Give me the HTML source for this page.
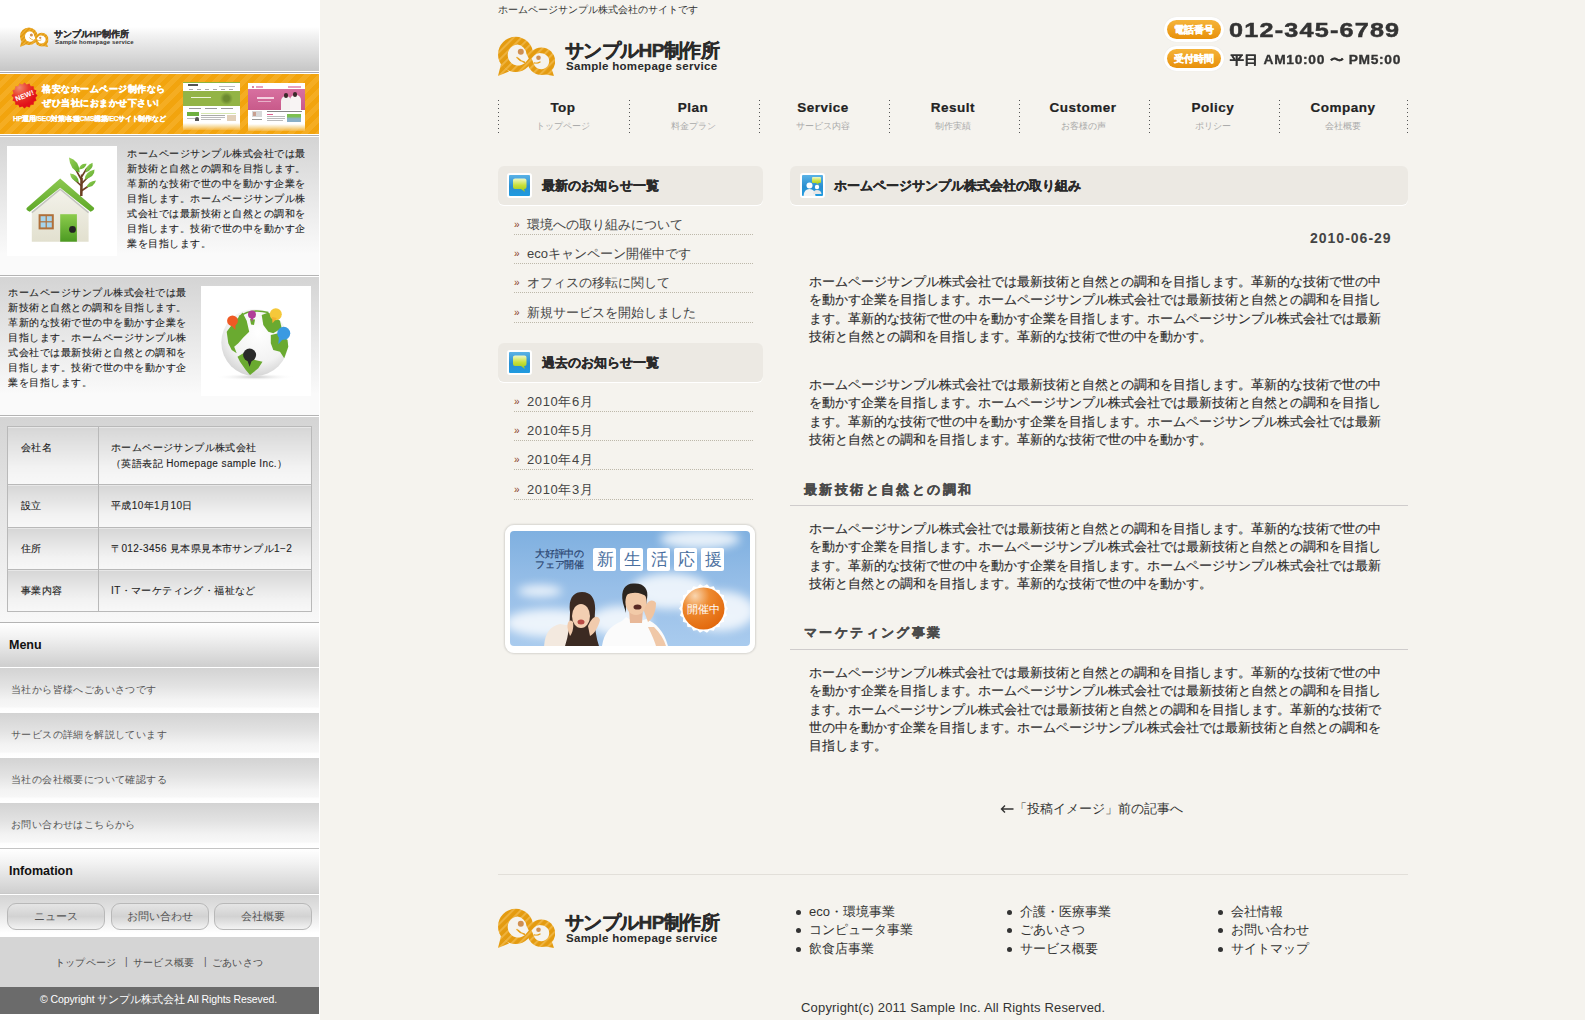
<!DOCTYPE html>
<html lang="ja"><head><meta charset="utf-8">
<style>
*{margin:0;padding:0;box-sizing:border-box}
html,body{width:1585px;height:1020px;overflow:hidden}
body{background:#f5f3ee;font-family:"Liberation Sans",sans-serif;color:#333;position:relative}
.a{position:absolute}
.nw{white-space:nowrap}
/* sidebar */
#side{position:absolute;left:0;top:0;width:320px;height:1020px;background:#fff}
#side .sep{position:absolute;left:0;width:319px;height:1px;background:#b4b4b4}
.hdr{left:0;top:0;width:319px;height:71px;background:linear-gradient(#fff 0,#fff 27px,#f4f4f4 34px,#c6c6c6 71px)}
.orange{left:0;top:74px;width:319px;height:60px;background:repeating-linear-gradient(135deg,#f2a40e 0 5px,#f5ad22 5px 10px)}
.blk{left:0;width:319px;background:linear-gradient(#d4d4d4,#e6e6e6 40%,#fafafa 85%,#fafafa)}
.stxt{font-size:10px;letter-spacing:.5px;line-height:15px;color:#222;-webkit-text-stroke:.1px #222}
.wbox{background:#fff}
table.co{position:absolute;left:7px;top:426px;width:305px;border-collapse:collapse;font-size:10px;letter-spacing:.4px;line-height:16px;color:#222;-webkit-text-stroke:.1px #222}
table.co td{border:1px solid #b9b9b9;background:linear-gradient(#d6d6d6,#e4e4e4 35%,#f2f2f2 70%,#f8f8f8);vertical-align:top;padding:13px 0 0 12px}
.mhd{left:0;width:319px;background:linear-gradient(#fff,#f3f3f3 30%,#cfcfcf)}
.mit{left:0;width:319px;background:linear-gradient(#d3d3d3,#e2e2e2 40%,#f3f3f3 72%,#f7f7f7 88%,#fdfdfd 92%,#fff)}
.mt{font-size:10px;letter-spacing:.4px;color:#555;left:11px}
.btn{top:903px;height:27px;border:1px solid #b8b8b8;border-radius:9px;background:linear-gradient(#e5e5e5,#d2d2d2 50%,#f3f3f3);font-size:10.5px;color:#555;text-align:center;line-height:25px}
/* main */
.navi{top:100px;width:1px;height:33px;background:repeating-linear-gradient(#555 0 1px,transparent 1px 4px)}
.nt{top:100px;width:130px;text-align:center;font-weight:bold;font-size:13.5px;color:#222;letter-spacing:0.5px;-webkit-text-stroke:.2px #222}
.ns{top:120px;width:130px;text-align:center;font-size:9px;color:#aaa}
.bh{height:39px;background:#ece9e3;border-radius:6px;box-shadow:0 1px 0 #fff}
.bt{font-weight:bold;font-size:13px;color:#2a2a2a;-webkit-text-stroke:.3px #2a2a2a}
.icon{width:25px;height:25px;border:2px solid #fff;border-radius:3px;background:linear-gradient(#5ab2e6,#2a8fd0 55%,#1f9be0)}
.li{left:514px;width:239px;height:29px;border-bottom:1px dotted #bdb8aa;font-size:13px;color:#444}
.li span.r{color:#8a3b1b;font-size:10px;position:absolute;left:0;top:13px}
.li span.t{position:absolute;left:13px;top:0}
.p{left:809px;font-size:13px;line-height:18.3px;color:#2e2e2e;white-space:nowrap;-webkit-text-stroke:.15px #2e2e2e}
.h3{left:804px;font-size:13px;font-weight:bold;letter-spacing:2.4px;color:#4a4a4a;-webkit-text-stroke:.3px #4a4a4a}
.h3l{left:790px;width:618px;height:1px;background:#cfcccc}
.fl{font-size:13px;color:#333;line-height:18.3px}
.fl div{position:relative;padding-left:13px}
.fl div:before{content:"";position:absolute;left:0;top:7px;width:5px;height:5px;border-radius:50%;background:#333}
</style></head><body>

<svg width="0" height="0" style="position:absolute">
 <defs>
  <pattern id="st" width="5.6" height="5.6" patternUnits="userSpaceOnUse" patternTransform="rotate(45)"><rect width="5.6" height="5.6" fill="#e49b10"/><rect width="2" height="5.6" fill="#eeb23e"/></pattern>
  <symbol id="logo" viewBox="0 0 57 40">
   <g fill="url(#st)">
    <circle cx="17.6" cy="18.4" r="17.6"/>
    <path d="M0 40 L3 28 L11 35.5 Z"/>
    <circle cx="43.4" cy="25.2" r="13.8"/>
    <path d="M56 40 L53 31 L45 38 Z"/>
   </g>
   <path d="M19.5 8.5 A10.5 10.5 0 1 0 27 27 L30.8 22.6 L28.5 18 A10.5 10.5 0 0 0 19.5 8.5 Z" style="fill:var(--face,#f5f3ee)"/>
   <path d="M43 17.2 A8 8 0 1 1 36.8 30 L33.6 22.4 L36 19.8 A8 8 0 0 1 43 17.2 Z" style="fill:var(--face,#f5f3ee)"/>
   <circle cx="22.8" cy="15.8" r="3" fill="#cf8f52"/>
   <circle cx="40.5" cy="21.7" r="2.3" fill="#cf8f52"/>
   <path d="M19 21.5 Q22 25 26.5 26.2" stroke="url(#st)" stroke-width="1.6" fill="none" stroke-linecap="round"/>
   <path d="M36.5 27 Q39.5 27.5 42 26" stroke="url(#st)" stroke-width="1.4" fill="none" stroke-linecap="round"/>
  </symbol>
 </defs>
</svg>
<div id="side">
  <!-- header -->
  <div class="a hdr"></div>
  <div class="a" style="left:0;top:72px;width:319px;height:1px;background:#a9a9b1"></div>
  <div class="a orange"></div>
  <div class="a" style="left:0;top:135px;width:319px;height:1px;background:#b0b0b0"></div>

  <!-- block 1 -->
  <div class="a blk" style="top:137px;height:138px"></div>
  <div class="sep" style="top:275px"></div>
  <!-- block 2 -->
  <div class="a blk" style="top:277px;height:138px"></div>
  <div class="sep" style="top:415px"></div>
  <!-- table block -->
  <div class="a blk" style="top:417px;height:205px;background:linear-gradient(#d4d4d4,#e3e3e3 40%,#f4f4f4 90%,#f8f8f8)"></div>
  <div class="sep" style="top:622px"></div>

  <!-- sidebar logo -->
  <svg class="a" style="left:20px;top:26.5px;--face:#fff" width="28.5" height="20" viewBox="0 0 57 40"><use href="#logo"/></svg>
  <div class="a nw" style="left:54px;top:27.5px;font-size:9px;font-weight:bold;color:#333;letter-spacing:-0.1px;-webkit-text-stroke:.25px #333">サンプルHP制作所</div>
  <div class="a nw" style="left:55px;top:38.5px;font-size:6px;font-weight:bold;color:#333;letter-spacing:0.15px">Sample homepage service</div>

  <!-- orange banner contents -->
  <svg class="a" style="left:11px;top:82px" width="27" height="27" viewBox="0 0 27 27">
    <defs><radialGradient id="nb" cx="0.3" cy="0.2" r="0.7"><stop offset="0" stop-color="#f08a70"/><stop offset="0.5" stop-color="#ea3a2a"/><stop offset="1" stop-color="#e2101a"/></radialGradient></defs>
    <polygon fill="url(#nb)" points="13.50,0.50 15.69,2.52 18.47,1.49 19.72,4.19 22.69,4.31 22.81,7.28 25.51,8.53 24.48,11.31 26.50,13.50 24.48,15.69 25.51,18.47 22.81,19.72 22.69,22.69 19.72,22.81 18.47,25.51 15.69,24.48 13.50,26.50 11.31,24.48 8.53,25.51 7.28,22.81 4.31,22.69 4.19,19.72 1.49,18.47 2.52,15.69 0.50,13.50 2.52,11.31 1.49,8.53 4.19,7.28 4.31,4.31 7.28,4.19 8.53,1.49 11.31,2.52"/>
    <text x="13.5" y="16.2" fill="#fff" font-size="7.2" font-weight="bold" font-family="Liberation Sans" text-anchor="middle" transform="rotate(-22 13.5 13.5)">NEW!</text>
  </svg>
  <div class="a nw" style="left:42px;top:83px;font-size:9px;font-weight:bold;color:#fff;line-height:13.5px;letter-spacing:.5px;-webkit-text-stroke:.4px #fff">格安なホームページ制作なら<br>ぜひ当社におまかせ下さい!</div>
  <div class="a nw" style="left:13px;top:114px;font-size:7px;font-weight:bold;color:#fff;letter-spacing:-0.3px;-webkit-text-stroke:.25px #fff">HP運用/SEO対策/各種CMS構築/ECサイト制作など</div>
  <div class="a" style="left:183px;top:82px;width:57px;height:48px;overflow:hidden;background:linear-gradient(#fff 0,#fff 41px,#f8e2b0 44px,rgba(248,200,120,.4) 48px)">
    <div class="a" style="left:0;top:0;width:57px;height:1px;background:#8db43c"></div>
    <div class="a" style="left:5px;top:2px;width:10px;height:2px;background:#555"></div>
    <div class="a" style="left:36px;top:4px;width:16px;height:1px;background:#bbb"></div>
    <div class="a" style="left:6px;top:7px;width:46px;height:1px;background:repeating-linear-gradient(90deg,#aaa 0 4px,transparent 4px 8px)"></div>
    <div class="a" style="left:0;top:9px;width:57px;height:14.5px;background:#93b446"></div>
    <div class="a" style="left:8px;top:15px;width:20px;height:1px;background:#eef4d8"></div>
    <div class="a" style="left:37px;top:10px;width:13px;height:13px;background:radial-gradient(#6c8a30 30%,rgba(150,180,70,0) 70%)"></div>
    <div class="a" style="left:6px;top:26px;width:46px;height:1px;background:repeating-linear-gradient(90deg,#999 0 12px,transparent 12px 16px)"></div>
    <div class="a" style="left:4px;top:30px;width:12px;height:4px;background:#6fb040"></div>
    <div class="a" style="left:18px;top:30.5px;width:35px;height:1px;background:#d6e6b0"></div>
    <div class="a" style="left:18px;top:33px;width:24px;height:1px;background:#aaa"></div>
    <div class="a" style="left:18px;top:35px;width:24px;height:1px;background:#bbb"></div>
    <div class="a" style="left:18px;top:37px;width:20px;height:1px;background:#bbb"></div>
    <div class="a" style="left:44px;top:33px;width:9px;height:6px;background:#e2d0b8"></div>
    <div class="a" style="left:4px;top:36px;width:8px;height:1px;background:#bbb"></div>
    <div class="a" style="left:12px;top:35px;width:4px;height:4px;background:#555;border-radius:2px 2px 0 0"></div>
  </div>
  <div class="a" style="left:248px;top:83px;width:57px;height:48px;overflow:hidden;background:linear-gradient(#fff 0,#fff 41px,#f8e2b0 44px,rgba(248,200,120,.4) 48px)">
    <div class="a" style="left:4px;top:3px;width:2px;height:2px;background:#d05a8a;border-radius:1px"></div>
    <div class="a" style="left:8px;top:3px;width:7px;height:1.5px;background:#e8a0c0"></div>
    <div class="a" style="left:40px;top:3px;width:13px;height:1.5px;background:#e8a0c0"></div>
    <div class="a" style="left:0;top:6px;width:57px;height:20.5px;background:linear-gradient(#d870a0,#c85a8a)"></div>
    <div class="a" style="left:9px;top:14px;width:17px;height:2px;background:#f4d0e0"></div>
    <div class="a" style="left:10px;top:18px;width:13px;height:1px;background:#e8b0c8"></div>
    <div class="a" style="left:33px;top:13px;width:10px;height:13.5px;background:#f4f0f0;border-radius:5px 5px 0 0"></div>
    <div class="a" style="left:42px;top:12px;width:11px;height:14.5px;background:#f8f4f4;border-radius:5px 5px 0 0"></div>
    <div class="a" style="left:35.5px;top:10px;width:4px;height:5px;background:#3a2a2a;border-radius:2px"></div>
    <div class="a" style="left:45px;top:9px;width:4px;height:5px;background:#3a2a2a;border-radius:2px"></div>
    <div class="a" style="left:4px;top:28px;width:10px;height:6px;background:#d8d8d8"></div>
    <div class="a" style="left:5px;top:29px;width:3px;height:4px;background:#c8a090"></div>
    <div class="a" style="left:19px;top:28px;width:35px;height:1px;background:#888"></div>
    <div class="a" style="left:19px;top:31px;width:6px;height:1px;background:#e06090"></div>
    <div class="a" style="left:19px;top:33px;width:18px;height:1px;background:#bbb"></div>
    <div class="a" style="left:19px;top:35px;width:18px;height:1px;background:#bbb"></div>
    <div class="a" style="left:19px;top:37px;width:16px;height:1px;background:#bbb"></div>
    <div class="a" style="left:39px;top:31px;width:14px;height:8px;background:linear-gradient(#7cc050 30%,#8ab0c8 60%)"></div>
    <div class="a" style="left:4px;top:36px;width:10px;height:1px;background:#999"></div>
  </div>
  <!-- block 1 content -->
  <div class="a wbox" style="left:7px;top:146px;width:110px;height:110px">
    <svg width="110" height="110" viewBox="0 0 110 110">
      <defs>
        <linearGradient id="wall" x1="0" y1="0" x2="0" y2="1"><stop offset="0" stop-color="#f3f2ea"/><stop offset="1" stop-color="#e2e0cf"/></linearGradient>
        <linearGradient id="roof" x1="0" y1="0" x2="0" y2="1"><stop offset="0" stop-color="#8cc850"/><stop offset="1" stop-color="#5ea828"/></linearGradient>
        <linearGradient id="door" x1="0" y1="0" x2="0" y2="1"><stop offset="0" stop-color="#8ccc4c"/><stop offset="1" stop-color="#4c9a22"/></linearGradient>
        <linearGradient id="leaf" x1="0" y1="0" x2="1" y2="1"><stop offset="0" stop-color="#9ad25a"/><stop offset="1" stop-color="#5aa82a"/></linearGradient>
      </defs>
      <path d="M74.3 50 L74.6 28.5 M74.4 40 L67 33 M74.5 34 L68 22 M74.5 31 L80 22 M74.3 38 L82 30 M74.3 45 L83 39" stroke="#6b3f22" stroke-width="1.6" fill="none"/>
      <path d="M74.3 50 L74.6 32" stroke="#6b3f22" stroke-width="2.4" fill="none"/>
      <g fill="url(#leaf)">
        <path d="M62 11.4 Q72 14 72.8 26.5 Q63 24 62 11.4 Z"/>
        <path d="M71.8 23.6 Q73 17 79.7 17.7 Q78 23 71.8 23.6 Z"/>
        <path d="M85.5 16.7 Q87 23 78.7 26.5 Q78 20 85.5 16.7 Z"/>
        <path d="M63 27.5 Q71 28 71.8 36.4 Q64 35 63 27.5 Z"/>
        <path d="M87.5 23.6 Q88 31 77.7 33.4 Q78 26 87.5 23.6 Z"/>
        <path d="M89 34.4 Q87 41 79.7 41.3 Q81 35 89 34.4 Z"/>
      </g>
      <path d="M24.8 66.7 L53.2 43.2 L81.6 66.7 L81.6 95.7 L24.8 95.7 Z" fill="url(#wall)"/>
      <path d="M24.8 66.7 L53.2 43.2 L81.6 66.7" stroke="#c4c4c0" stroke-width="1.6" fill="none"/>
      <path d="M19.9 61.8 L53.2 32.4 L87 61.8 Q88 64 83.6 65.8 L53.2 41.7 L22.8 65.8 Q18 64 19.9 61.8 Z" fill="url(#roof)"/>
      <rect x="31.6" y="68.2" width="15.2" height="15.2" fill="#b0703a"/>
      <rect x="33.6" y="70.2" width="5" height="5" fill="#a6d4ec"/><rect x="39.8" y="70.2" width="5" height="5" fill="#a6d4ec"/>
      <rect x="33.6" y="76.4" width="5" height="5" fill="#a6d4ec"/><rect x="39.8" y="76.4" width="5" height="5" fill="#a6d4ec"/>
      <rect x="53.2" y="68.2" width="16.7" height="27.5" fill="url(#door)"/>
      <circle cx="65.5" cy="83.4" r="3.4" fill="#232323"/>
    </svg>
  </div>
  <div class="a nw stxt" style="left:127px;top:146px">ホームページサンプル株式会社では最<br>新技術と自然との調和を目指します。<br>革新的な技術で世の中を動かす企業を<br>目指します。ホームページサンプル株<br>式会社では最新技術と自然との調和を<br>目指します。技術で世の中を動かす企<br>業を目指します。</div>

  <!-- block 2 content -->
  <div class="a nw stxt" style="left:8px;top:285px">ホームページサンプル株式会社では最<br>新技術と自然との調和を目指します。<br>革新的な技術で世の中を動かす企業を<br>目指します。ホームページサンプル株<br>式会社では最新技術と自然との調和を<br>目指します。技術で世の中を動かす企<br>業を目指します。</div>
  <div class="a wbox" style="left:201px;top:286px;width:110px;height:110px">
    <svg width="110" height="110" viewBox="0 0 110 110">
      <defs>
        <radialGradient id="gl" cx="0.55" cy="0.35" r="0.75"><stop offset="0" stop-color="#fff"/><stop offset="0.6" stop-color="#f2f2f2"/><stop offset="1" stop-color="#c8c8c8"/></radialGradient>
        <radialGradient id="sh" cx="0.5" cy="0.5" r="0.5"><stop offset="0" stop-color="#c8c8c8"/><stop offset="1" stop-color="#fff" stop-opacity="0"/></radialGradient>
      </defs>
      <ellipse cx="54" cy="91" rx="40" ry="3.5" fill="url(#sh)"/>
      <circle cx="53.8" cy="56.5" r="33.5" fill="url(#gl)"/>
      <g fill="#6aaa30">
        <path d="M25.7 45.7 L30.7 39 L38 30.7 L41.5 26.5 L45.7 34.8 L48.2 45.7 L42.3 51.5 L37.3 57.3 L33.2 60.7 L35.7 67.3 L30.7 64 L27.3 57.3 Z"/>
        <path d="M49 33 L54 33.5 L53 39 L50 38.5 Z"/>
        <path d="M36.5 70.7 L42.3 67.3 L54 74 L61.5 75.7 L57.3 82.3 L49 89 L44.8 84 L39 75.7 Z"/>
        <path d="M60.7 29 L67.3 26.5 L79 34.8 L80.7 42.3 L72.3 47.3 L67.3 45.7 L62.3 39 Z"/>
        <path d="M69.8 49 L77.3 47.3 L86.5 54 L87.3 60.7 L83.2 72.3 L79 65.7 L72.3 64 L69.8 57.3 Z"/>
      </g>
      <path d="M38 30.7 Q50 22 67.3 26.5" stroke="#6aaa30" stroke-width="1.6" fill="none"/>
      <circle cx="31.5" cy="34.8" r="5.4" fill="#ef5a24"/><path d="M28.5 37 L34.5 37 L34.4 44 Z" fill="#ef5a24"/>
      <circle cx="51" cy="28.6" r="4" fill="#b03e98"/><path d="M48.8 30 L53.2 30 L51 35.7 Z" fill="#b03e98"/>
      <circle cx="74.8" cy="28.2" r="6" fill="#f5c83a"/><path d="M71 31 L76 32 L71.5 37.3 Z" fill="#f5b030"/>
      <circle cx="82.75" cy="47.3" r="6.5" fill="#3a9ae2"/><path d="M78 50 L83 52 L77.3 58.2 Z" fill="#3a9ae2"/>
      <circle cx="48.6" cy="69" r="6.5" fill="#2a2a2a"/><path d="M45.5 72 L51.7 72 L48.6 80.7 Z" fill="#2a2a2a"/>
    </svg>
  </div>

  <!-- company table -->
  <table class="co">
    <tr style="height:58px"><td style="width:91px;padding-left:13px">会社名</td><td>ホームページサンプル株式会社<br>（英語表記 Homepage sample Inc.）</td></tr>
    <tr style="height:43px"><td style="padding-left:13px">設立</td><td>平成10年1月10日</td></tr>
    <tr style="height:42px"><td style="padding-left:13px">住所</td><td>〒012-3456 見本県見本市サンプル1−2</td></tr>
    <tr style="height:42px"><td style="padding-left:13px">事業内容</td><td>IT・マーケティング・福祉など</td></tr>
  </table>

  <!-- menu -->
  <div class="a mhd" style="top:623px;height:43px"></div>
  <div class="a nw" style="left:9px;top:638px;font-size:12.5px;font-weight:bold;color:#111">Menu</div>
  <div class="a" style="left:0;top:666px;width:319px;height:1px;background:#cfcfcf"></div>
  <div class="a mit" style="top:668px;height:44px"></div>
  <div class="a mit" style="top:713px;height:44px"></div>
  <div class="a mit" style="top:758px;height:44px"></div>
  <div class="a mit" style="top:803px;height:44px"></div>
  <div class="a nw mt" style="top:683px">当社から皆様へごあいさつです</div>
  <div class="a nw mt" style="top:728px">サービスの詳細を解説しています</div>
  <div class="a nw mt" style="top:773px">当社の会社概要について確認する</div>
  <div class="a nw mt" style="top:818px">お問い合わせはこちらから</div>
  <div class="sep" style="top:848px;background:#c4c4c4"></div>
  <div class="a mhd" style="top:849px;height:44px"></div>
  <div class="a nw" style="left:9px;top:864px;font-size:12.5px;font-weight:bold;color:#111">Infomation</div>
  <div class="a" style="left:0;top:893px;width:319px;height:1px;background:#c9c9c9"></div>
  <div class="a mit" style="top:895px;height:42px;background:linear-gradient(#d4d4d4,#e2e2e2 35%,#f4f4f4 70%,#fff 90%)"></div>
  <div class="a btn" style="left:7px;width:98px">ニュース</div>
  <div class="a btn" style="left:111px;width:98px">お問い合わせ</div>
  <div class="a btn" style="left:214px;width:98px">会社概要</div>
  <div class="a" style="left:0;top:937px;width:319px;height:50px;background:#d5d5d5"></div>
  <div class="a nw" style="left:55px;top:956px;font-size:10px;color:#4a4a4a;letter-spacing:.2px">トップページ</div>
  <div class="a nw" style="left:125px;top:956px;font-size:10px;color:#555">|</div>
  <div class="a nw" style="left:133px;top:956px;font-size:10px;color:#4a4a4a;letter-spacing:.2px">サービス概要</div>
  <div class="a nw" style="left:204px;top:956px;font-size:10px;color:#555">|</div>
  <div class="a nw" style="left:212px;top:956px;font-size:10px;color:#4a4a4a;letter-spacing:.2px">ごあいさつ</div>
  <div class="a" style="left:0;top:987px;width:319px;height:27px;background:#6b6b6b"></div>
  <div class="a nw" style="left:40px;top:993px;font-size:10.5px;color:#fff;letter-spacing:-.1px">© Copyright サンプル株式会社 All Rights Reseved.</div>
</div>

<!-- MAIN -->
<div class="a nw" style="left:498px;top:3px;font-size:10px;letter-spacing:0;color:#333">ホームページサンプル株式会社のサイトです</div>
<!-- header logo -->
<svg class="a" style="left:498px;top:36px" width="57" height="40" viewBox="0 0 57 40"><use href="#logo"/></svg>
<div class="a nw" style="left:565px;top:38px;font-size:19px;font-weight:bold;color:#2a2a2a;letter-spacing:-0.6px;-webkit-text-stroke:.45px #2a2a2a">サンプルHP制作所</div>
<div class="a nw" style="left:566px;top:60px;font-size:11.5px;font-weight:bold;color:#2a2a2a;letter-spacing:0.3px">Sample homepage service</div>

<!-- phone -->
<div class="a" style="left:1164px;top:17px;width:60px;height:25px;border-radius:13px;background:#fff;box-shadow:0 0 1px #ddd"></div>
<div class="a nw" style="left:1167px;top:20px;width:54px;height:19px;border-radius:10px;background:linear-gradient(#f5b43a,#e8900a);color:#fff;font-size:10px;font-weight:bold;text-align:center;line-height:19px;-webkit-text-stroke:.3px #fff">電話番号</div>
<div class="a" style="left:1164px;top:46px;width:60px;height:25px;border-radius:13px;background:#fff;box-shadow:0 0 1px #ddd"></div>
<div class="a nw" style="left:1167px;top:49px;width:54px;height:19px;border-radius:10px;background:linear-gradient(#f5b43a,#e8900a);color:#fff;font-size:10px;font-weight:bold;text-align:center;line-height:19px;-webkit-text-stroke:.3px #fff">受付時間</div>
<div class="a nw" style="left:1229px;top:18px;font-size:21px;font-weight:bold;color:#333;letter-spacing:1px;-webkit-text-stroke:.5px #333;transform:scaleX(1.2);transform-origin:0 0">012-345-6789</div>
<div class="a nw" style="left:1230px;top:52px;font-size:12px;font-weight:bold;color:#333;letter-spacing:.6px;transform:scaleX(1.15);transform-origin:0 0;-webkit-text-stroke:.3px #333">平日 AM10:00 〜 PM5:00</div>

<!-- nav -->
<div class="a navi" style="left:498px"></div>
<div class="a navi" style="left:629px"></div>
<div class="a navi" style="left:759px"></div>
<div class="a navi" style="left:889px"></div>
<div class="a navi" style="left:1019px"></div>
<div class="a navi" style="left:1149px"></div>
<div class="a navi" style="left:1279px"></div>
<div class="a navi" style="left:1407px"></div>
<div class="a nt" style="left:498px">Top</div><div class="a ns" style="left:498px">トップページ</div>
<div class="a nt" style="left:628px">Plan</div><div class="a ns" style="left:628px">料金プラン</div>
<div class="a nt" style="left:758px">Service</div><div class="a ns" style="left:758px">サービス内容</div>
<div class="a nt" style="left:888px">Result</div><div class="a ns" style="left:888px">制作実績</div>
<div class="a nt" style="left:1018px">Customer</div><div class="a ns" style="left:1018px">お客様の声</div>
<div class="a nt" style="left:1148px">Policy</div><div class="a ns" style="left:1148px">ポリシー</div>
<div class="a nt" style="left:1278px">Company</div><div class="a ns" style="left:1278px">会社概要</div>

<!-- left column -->
<div class="a bh" style="left:498px;top:166px;width:265px"></div>
<div class="a icon" style="left:507px;top:173px"><svg width="21" height="21" viewBox="0 0 21 21" style="position:absolute;left:0;top:0"><defs><linearGradient id="bub" x1="0" y1="0" x2="0" y2="1"><stop offset="0" stop-color="#eef7c8"/><stop offset="0.5" stop-color="#c9e03a"/><stop offset="1" stop-color="#9cc61a"/></linearGradient></defs><path d="M4 5 Q4 3.5 6 3.5 L15.5 3.5 Q17.5 3.5 17.5 5.5 L17.5 12 Q17.5 14 15.5 14 L15 14 L16 17 L12 14 L6 14 Q4 14 4 12 Z" fill="url(#bub)"/></svg></div>
<div class="a nw bt" style="left:542px;top:177px">最新のお知らせ一覧</div>
<div class="a li" style="top:206px"><span class="r">»</span><span class="t" style="top:10px">環境への取り組みについて</span></div>
<div class="a li" style="top:235px"><span class="r">»</span><span class="t" style="top:10px">ecoキャンペーン開催中です</span></div>
<div class="a li" style="top:264px"><span class="r">»</span><span class="t" style="top:10px">オフィスの移転に関して</span></div>
<div class="a li" style="top:294px"><span class="r">»</span><span class="t" style="top:10px">新規サービスを開始しました</span></div>

<div class="a bh" style="left:498px;top:343px;width:265px"></div>
<div class="a icon" style="left:507px;top:350px"><svg width="21" height="21" viewBox="0 0 21 21" style="position:absolute;left:0;top:0"><path d="M4 5 Q4 3.5 6 3.5 L15.5 3.5 Q17.5 3.5 17.5 5.5 L17.5 12 Q17.5 14 15.5 14 L15 14 L16 17 L12 14 L6 14 Q4 14 4 12 Z" fill="url(#bub)"/></svg></div>
<div class="a nw bt" style="left:542px;top:354px">過去のお知らせ一覧</div>
<div class="a li" style="top:383px"><span class="r">»</span><span class="t" style="top:10px;letter-spacing:.6px">2010年6月</span></div>
<div class="a li" style="top:412px"><span class="r">»</span><span class="t" style="top:10px;letter-spacing:.6px">2010年5月</span></div>
<div class="a li" style="top:441px"><span class="r">»</span><span class="t" style="top:10px;letter-spacing:.6px">2010年4月</span></div>
<div class="a li" style="top:471px"><span class="r">»</span><span class="t" style="top:10px;letter-spacing:.6px">2010年3月</span></div>


<!-- banner -->
<div class="a" style="left:505px;top:525px;width:250px;height:128px;border-radius:9px;background:#fff;box-shadow:0 0 2px 1px rgba(0,0,0,.13)"></div>
<div class="a" style="left:510px;top:531px;width:240px;height:115px;border-radius:4px;overflow:hidden;background:linear-gradient(#7fb0e0,#98bfe8 50%,#a9cbee)">
  <svg width="240" height="115" viewBox="0 0 240 115" style="position:absolute;left:0;top:0">
    <defs><filter id="bl"><feGaussianBlur stdDeviation="5"/></filter>
    <radialGradient id="og" cx="0.3" cy="0.2" r="0.85"><stop offset="0" stop-color="#f9d6b0"/><stop offset="0.4" stop-color="#ee8a30"/><stop offset="1" stop-color="#e2680c"/></radialGradient></defs>
    <g fill="#fff" opacity="0.8" filter="url(#bl)">
      <ellipse cx="160" cy="60" rx="40" ry="18"/><ellipse cx="210" cy="80" rx="35" ry="20"/>
      <ellipse cx="40" cy="92" rx="45" ry="14"/><ellipse cx="110" cy="90" rx="30" ry="15"/>
      <ellipse cx="190" cy="8" rx="40" ry="10"/><ellipse cx="30" cy="60" rx="22" ry="6"/>
    </g>
    <!-- woman --><g transform="translate(0 3)">
    <path d="M34 115 C34 100 40 92 50 90 L62 92 C66 100 68 108 68 115 Z" fill="#f3e9df"/>
    <path d="M60 78 C58 64 64 58 72 58 C82 58 86 66 85 78 C84 92 86 104 90 115 L54 115 C58 104 60 92 60 78 Z" fill="#3b2a22"/>
    <ellipse cx="71" cy="82" rx="9" ry="12" fill="#f3cfb2"/>
    <ellipse cx="71" cy="88" rx="3.5" ry="2.5" fill="#b84a44"/>
    <path d="M78 92 C82 82 88 80 90 86 C88 94 84 100 80 102 Z" fill="#f1cbad"/>
    <path d="M58 96 C56 88 60 84 63 88 C64 94 62 100 60 102 Z" fill="#f1cbad"/>
    </g>
    <!-- man -->
    <path d="M92 115 C94 102 100 95 112 90 L116 86 L126 92 L136 88 C146 92 154 100 158 115 Z" fill="#fbfbfb"/>
    <path d="M144 96 C150 102 154 108 156 115 L146 115 C144 108 140 100 138 96 Z" fill="#f0c8a8"/>
    <path d="M119 78 L133 78 L132 92 L120 92 Z" fill="#e8b898"/>
    <path d="M113 72 C110 58 116 52 124 52.5 C134 52 139 58 137 68 L136 74 C134 64 128 60 120 62 C116 64 116 70 116 82 Z" fill="#2b2520"/>
    <ellipse cx="126" cy="71" rx="10.6" ry="13" fill="#f2caa8"/>
    <path d="M113 66 C114 58 120 55 126 56 C132 56 136 60 137 66 C132 62 124 60 116 64 Z" fill="#2b2520"/>
    <ellipse cx="127.5" cy="76" rx="4" ry="2.6" fill="#5a2a24"/>
    <path d="M134 80 C136 70 142 67 146 72 C146 82 142 88 138 91 Z" fill="#f0c4a0"/>
    <!-- badge -->
    <polygon fill="#fff" points="218.00,77.50 215.57,80.67 217.01,84.40 213.78,86.76 214.11,90.75 210.35,92.10 209.54,96.02 205.56,96.26 203.68,99.79 199.78,98.90 196.99,101.75 193.50,99.80 190.01,101.75 187.22,98.90 183.32,99.79 181.44,96.26 177.46,96.02 176.65,92.10 172.89,90.75 173.22,86.76 169.99,84.40 171.43,80.67 169.00,77.50 171.43,74.33 169.99,70.60 173.22,68.24 172.89,64.25 176.65,62.90 177.46,58.98 181.44,58.74 183.32,55.21 187.22,56.10 190.01,53.25 193.50,55.20 196.99,53.25 199.78,56.10 203.68,55.21 205.56,58.74 209.54,58.98 210.35,62.90 214.11,64.25 213.78,68.24 217.01,70.60 215.57,74.33"/>
    <circle cx="193.5" cy="77.5" r="21" fill="url(#og)"/>
    <text x="193.5" y="81.5" fill="#fff" font-size="11" text-anchor="middle" font-family="Liberation Sans">開催中</text>
  </svg>
  <div class="a nw" style="left:25px;top:17px;font-size:10px;line-height:11px;color:#2a4470;letter-spacing:-0.2px;-webkit-text-stroke:.2px #2a4470">大好評中の<br>フェア開催</div>
  <div class="a" style="left:83px;top:17px;width:23px;height:23px;background:#fff;border-radius:2px"></div>
  <div class="a" style="left:110px;top:17px;width:23px;height:23px;background:#fff;border-radius:2px"></div>
  <div class="a" style="left:137px;top:17px;width:23px;height:23px;background:#fff;border-radius:2px"></div>
  <div class="a" style="left:164px;top:17px;width:23px;height:23px;background:#fff;border-radius:2px"></div>
  <div class="a" style="left:191px;top:17px;width:23px;height:23px;background:#fff;border-radius:2px"></div>
  <div class="a nw" style="left:84px;top:20px;font-size:17px;line-height:17px;color:#4a70a0;letter-spacing:10px;padding-left:3px">新生活応援</div>
</div>

<!-- right column -->
<div class="a bh" style="left:790px;top:166px;width:618px"></div>
<div class="a icon" style="left:800px;top:173px"><svg width="21" height="21" viewBox="0 0 21 21" style="position:absolute;left:0;top:0"><path d="M10 3 Q10 2 11 2 L18 2 Q19 2 19 3 L19 7 Q19 8 18 8 L16 8 L17 10 L14 8 L11 8 Q10 8 10 7 Z" fill="url(#bub)"/><circle cx="7.5" cy="10.5" r="3" fill="#fff"/><path d="M1.5 21 Q2 14 7.5 14 Q13 14 13.5 21 Z" fill="#f2f2f2"/><circle cx="15" cy="12" r="2.2" fill="#fff"/><path d="M11 19 Q11.5 15 15 15 Q19 15 19.5 19 Z" fill="#e6e6e6"/></svg></div>
<div class="a nw bt" style="left:834px;top:177px">ホームページサンプル株式会社の取り組み</div>
<div class="a nw" style="left:1310px;top:230px;font-size:14px;font-weight:bold;color:#444;letter-spacing:1px">2010-06-29</div>



<div class="a p" style="top:273px">ホームページサンプル株式会社では最新技術と自然との調和を目指します。革新的な技術で世の中<br>を動かす企業を目指します。ホームページサンプル株式会社では最新技術と自然との調和を目指し<br>ます。革新的な技術で世の中を動かす企業を目指します。ホームページサンプル株式会社では最新<br>技術と自然との調和を目指します。革新的な技術で世の中を動かす。</div>
<div class="a p" style="top:376px">ホームページサンプル株式会社では最新技術と自然との調和を目指します。革新的な技術で世の中<br>を動かす企業を目指します。ホームページサンプル株式会社では最新技術と自然との調和を目指し<br>ます。革新的な技術で世の中を動かす企業を目指します。ホームページサンプル株式会社では最新<br>技術と自然との調和を目指します。革新的な技術で世の中を動かす。</div>
<div class="a nw h3" style="left:804px;top:481px">最新技術と自然との調和</div>
<div class="a h3l" style="top:505px"></div>
<div class="a p" style="top:520px">ホームページサンプル株式会社では最新技術と自然との調和を目指します。革新的な技術で世の中<br>を動かす企業を目指します。ホームページサンプル株式会社では最新技術と自然との調和を目指し<br>ます。革新的な技術で世の中を動かす企業を目指します。ホームページサンプル株式会社では最新<br>技術と自然との調和を目指します。革新的な技術で世の中を動かす。</div>
<div class="a nw h3" style="left:804px;top:624px">マーケティング事業</div>
<div class="a h3l" style="top:649px"></div>
<div class="a p" style="top:664px">ホームページサンプル株式会社では最新技術と自然との調和を目指します。革新的な技術で世の中<br>を動かす企業を目指します。ホームページサンプル株式会社では最新技術と自然との調和を目指し<br>ます。ホームページサンプル株式会社では最新技術と自然との調和を目指します。革新的な技術で<br>世の中を動かす企業を目指します。ホームページサンプル株式会社では最新技術と自然との調和を<br>目指します。</div>
<svg class="a" style="left:1000px;top:804px" width="14" height="10" viewBox="0 0 14 10"><path d="M1.5 5 L13.5 5 M5 1.5 L1.5 5 L5 8.5" stroke="#333" stroke-width="1.4" fill="none"/></svg><div class="a nw" style="left:1014px;top:800px;font-size:13px;color:#333">「投稿イメージ」前の記事へ</div>

<!-- footer -->
<div class="a" style="left:498px;top:874px;width:910px;height:1px;background:#e2dfd9"></div>
<svg class="a" style="left:498px;top:908px" width="57" height="40" viewBox="0 0 57 40"><use href="#logo"/></svg>
<div class="a nw" style="left:565px;top:910px;font-size:19px;font-weight:bold;color:#2a2a2a;letter-spacing:-0.6px;-webkit-text-stroke:.45px #2a2a2a">サンプルHP制作所</div>
<div class="a nw" style="left:566px;top:932px;font-size:11.5px;font-weight:bold;color:#2a2a2a;letter-spacing:0.3px">Sample homepage service</div>
<div class="a fl nw" style="left:796px;top:903px"><div>eco・環境事業</div><div>コンピュータ事業</div><div>飲食店事業</div></div>
<div class="a fl nw" style="left:1007px;top:903px"><div>介護・医療事業</div><div>ごあいさつ</div><div>サービス概要</div></div>
<div class="a fl nw" style="left:1218px;top:903px"><div>会社情報</div><div>お問い合わせ</div><div>サイトマップ</div></div>
<div class="a nw" style="left:801px;top:1000px;font-size:13px;color:#333;letter-spacing:.18px">Copyright(c) 2011 Sample Inc. All Rights Reserved.</div>
</body></html>
